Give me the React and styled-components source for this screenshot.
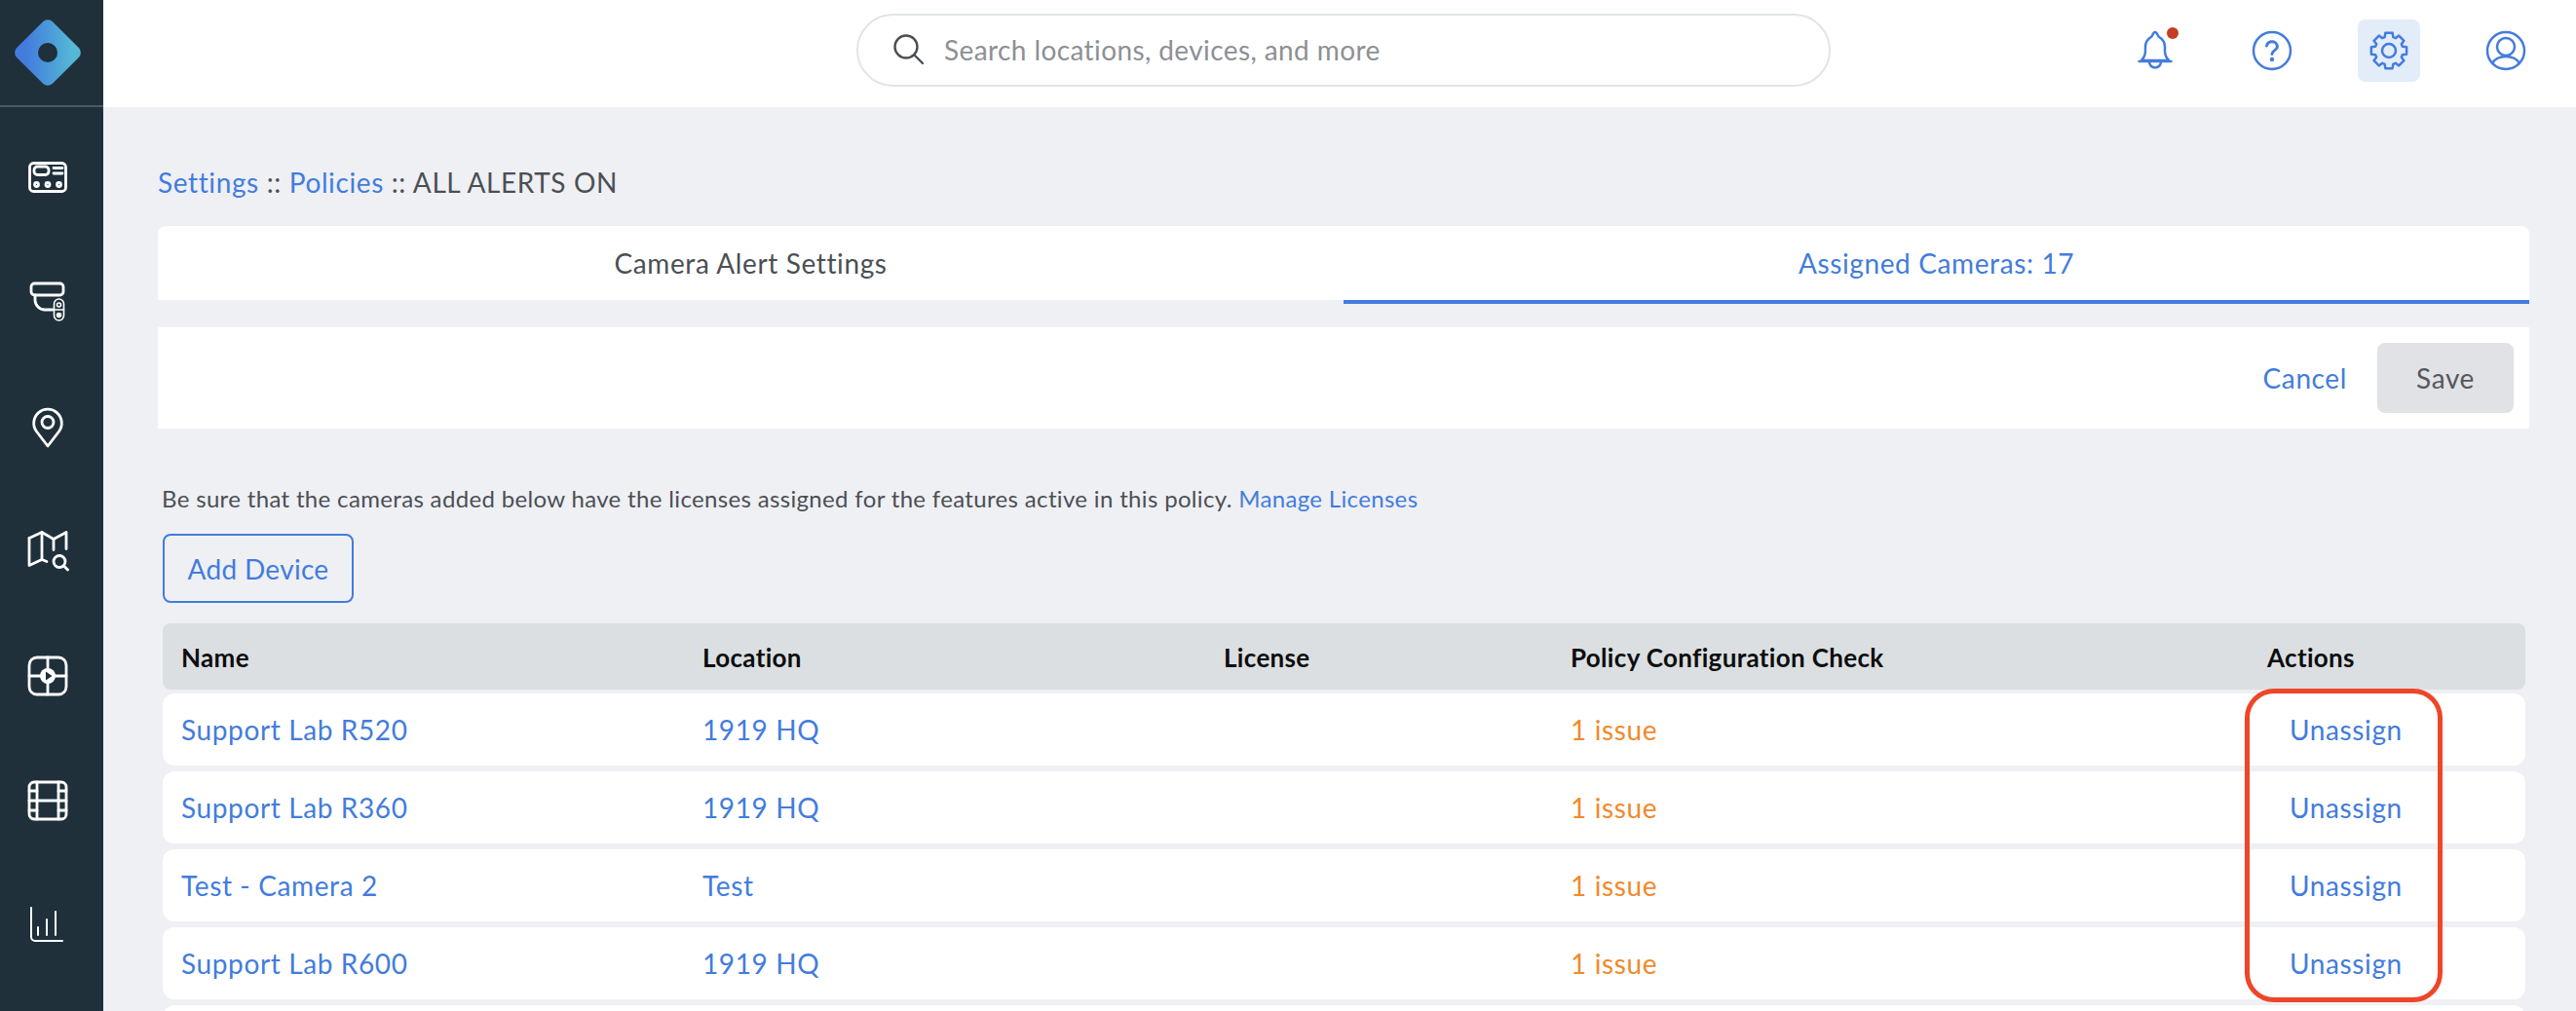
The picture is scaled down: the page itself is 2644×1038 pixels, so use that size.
import React from 'react'
import styled, { createGlobalStyle } from 'styled-components'

const BLUE = '#437cdd'
const FONT = `'Lato', 'Open Sans', sans-serif`

const GlobalStyle = createGlobalStyle`
  html, body {
    margin: 0;
    padding: 0;
    background: #eff0f4;
    overflow: hidden;
  }
  * { box-sizing: border-box; }
`

const Shell = styled.div`
  display: flex;
  width: 2644px;
  height: 1038px;
  overflow: hidden;
  font-family: ${FONT};
  font-size: 28px;
  letter-spacing: 0.62px;
  color: #4b4f54;
`

const Sidebar = styled.nav`
  flex: 0 0 106px;
  display: flex;
  flex-direction: column;
  background: #1f303b;
`

const LogoWrap = styled.div`
  height: 110px;
  flex: none;
  padding-right: 8px;
  display: flex;
  align-items: center;
  justify-content: center;
  border-bottom: 2px solid #4a5a64;
`

const NavList = styled.div`
  padding: 8px 8px 0 0;
  display: flex;
  flex-direction: column;
`

const NavItem = styled.div`
  flex: none;
  height: 128px;
  display: flex;
  align-items: center;
  justify-content: center;
`

const Column = styled.div`
  flex: 1;
  min-width: 0;
  display: flex;
  flex-direction: column;
`

const Header = styled.header`
  flex: none;
  height: 110px;
  background: #fff;
  padding: 0 40px 0 773px;
  display: flex;
  align-items: center;
  justify-content: space-between;
`

const Search = styled.div`
  width: 1000px;
  height: 75px;
  margin-top: -7px;
  border: 2px solid #e2e4e8;
  border-radius: 38px;
  padding: 0 0 2px 35px;
  display: flex;
  align-items: center;
  gap: 19px;
  letter-spacing: 0.4px;
  color: #8d9094;
`

const HeaderIcons = styled.div`
  display: flex;
  gap: 56px;
  margin-top: -7px;
`

const IconButton = styled.div`
  position: relative;
  width: 64px;
  height: 64px;
  border-radius: 8px;
  background: ${p => (p.$active ? '#e3ecf9' : 'transparent')};
  display: flex;
  align-items: center;
  justify-content: center;
`

const Dot = styled.span`
  position: absolute;
  left: 44px;
  top: 8px;
  width: 12px;
  height: 12px;
  border-radius: 50%;
  background: #c43d25;
`

const Main = styled.main`
  flex: 1;
  padding: 58px 48px 0 56px;
`

const Crumbs = styled.div`
  height: 38px;
  line-height: 38px;
  margin-bottom: 26px;
`

const Link = styled.a`
  color: ${BLUE};
  text-decoration: none;
`

const Tabs = styled.div`
  display: grid;
  grid-template-columns: 1fr 1fr;
  height: 80px;
`

const Tab = styled.div`
  display: flex;
  align-items: center;
  justify-content: center;
  background: #fff;
  background-clip: padding-box;
  border-radius: ${p => (p.$active ? '0 8px 0 0' : '8px 0 0 0')};
  color: ${p => (p.$active ? BLUE : '#4b4f54')};
  border-bottom: 4px solid ${p => (p.$active ? BLUE : 'transparent')};
`

const Toolbar = styled.div`
  height: 104px;
  margin-top: 24px;
  padding-right: 16px;
  background: #fff;
  display: flex;
  align-items: center;
  justify-content: flex-end;
  gap: 31px;
`

const SaveButton = styled.div`
  width: 140px;
  height: 72px;
  border-radius: 8px;
  background: #e1e2e5;
  color: #55585c;
  display: flex;
  align-items: center;
  justify-content: center;
`

const Inset = styled.div`
  padding: 0 4px 0 5px;
`

const Notice = styled.p`
  margin: 55px 0 19px -1px;
  height: 34px;
  line-height: 34px;
  font-size: 24px;
  letter-spacing: 0.34px;
`

const AddButton = styled.div`
  width: 196px;
  height: 71px;
  border: 2px solid ${BLUE};
  border-radius: 8px;
  color: ${BLUE};
  letter-spacing: 0.3px;
  display: flex;
  align-items: center;
  justify-content: center;
`

const Table = styled.div`
  position: relative;
  margin-top: 21px;
  display: flex;
  flex-direction: column;
  gap: 6px;
`

const columns = `grid-template-columns: 535px 535px 356px 715px 1fr;`

const HeadRow = styled.div`
  display: grid;
  ${columns}
  align-items: center;
  height: 68px;
  margin-bottom: -2px;
  padding: 2px 0 0 19px;
  background: #dbdfe2;
  border-radius: 8px;
  font-size: 26px;
  font-weight: 700;
  letter-spacing: 0.33px;
  color: #0d0d0d;
`

const Row = styled.div`
  display: grid;
  ${columns}
  align-items: center;
  flex: none;
  height: 74px;
  padding: 0 0 1px 19px;
  background: #fff;
  border-radius: 12px;
  color: ${BLUE};
`

const Issue = styled.span`
  color: #f08a2c;
`

const Action = styled.span`
  padding-left: 23px;
`

const Highlight = styled.div`
  position: absolute;
  left: 2137px;
  top: 67px;
  width: 203px;
  height: 322px;
  border: 5px solid #ee4628;
  border-radius: 30px;
  pointer-events: none;
`

const Line = props => (
  <g fill="none" stroke="#fff" strokeWidth="2.8" strokeLinecap="round" strokeLinejoin="round" {...props} />
)

const Logo = () => (
  <svg width="72" height="72" viewBox="0 0 72 72">
    <defs>
      <linearGradient id="logoFill" x1="0" y1="1" x2="1" y2="0">
        <stop offset="0.2" stopColor="#437cdd" />
        <stop offset="0.85" stopColor="#55b8d6" />
      </linearGradient>
    </defs>
    <rect x="10" y="10" width="52" height="52" rx="7" fill="url(#logoFill)" transform="rotate(45 36 36)" />
    <circle cx="36" cy="36" r="10" fill="#1f303b" />
  </svg>
)

const PanelIcon = () => (
  <svg width="44" height="44" viewBox="0 0 44 44">
    <Line>
      <rect x="3.5" y="7.5" width="37" height="29" rx="4" />
      <rect x="8" y="11" width="15" height="8.5" rx="3.5" />
      <path d="M28 12.5h9M28 18h9" />
      <circle cx="10.5" cy="29.5" r="2" />
      <circle cx="22" cy="29.5" r="2" />
      <circle cx="33.5" cy="29.5" r="2" />
    </Line>
  </svg>
)

const CameraIcon = () => (
  <svg width="44" height="44" viewBox="0 0 44 44">
    <Line>
      <rect x="5" y="3" width="33" height="12" rx="3.5" />
      <path d="M9 15v5a10 10 0 0 0 10 10h8" />
    </Line>
    <Line strokeWidth="1.6">
      <rect x="28.5" y="19" width="10" height="22" rx="5" />
      <path d="M28.5 30h10" />
      <circle cx="33.5" cy="25" r="2" />
      <circle cx="33.5" cy="35.5" r="2" fill="#fff" />
    </Line>
  </svg>
)

const PinIcon = () => (
  <svg width="44" height="44" viewBox="0 0 44 44">
    <Line>
      <path d="M22 42L10.5 27a14.3 14.3 0 1 1 23 0z" />
      <circle cx="22" cy="17.5" r="6" />
    </Line>
  </svg>
)

const MapIcon = () => (
  <svg width="44" height="44" viewBox="0 0 44 44">
    <Line>
      <path d="M3 8.5L16 2.5l12 7 13-7v17" />
      <path d="M3 8.5v28l13-6 5 2" />
      <path d="M16 2.5v28M28 9.5v11" />
      <circle cx="34" cy="32.5" r="6" />
      <path d="M38.5 37l4 4" />
    </Line>
  </svg>
)

const PlayGridIcon = () => (
  <svg width="44" height="44" viewBox="0 0 44 44">
    <Line>
      <rect x="3" y="3" width="38" height="38" rx="8" />
      <path d="M22 3v38M3 22h38" />
    </Line>
    <circle cx="22" cy="22" r="8" fill="#fff" />
    <path d="M20 17.5l6.5 4.5-6.5 4.5z" fill="#1f303b" />
  </svg>
)

const FilmIcon = () => (
  <svg width="44" height="44" viewBox="0 0 44 44">
    <Line>
      <rect x="3" y="3" width="38" height="38" rx="5" />
      <path d="M11 3v38M33 3v38M11 22h22" />
      <path d="M3 12h8M3 22h8M3 32h8M33 12h8M33 22h8M33 32h8" />
    </Line>
  </svg>
)

const ChartIcon = () => (
  <svg width="44" height="44" viewBox="0 0 44 44">
    <Line strokeWidth="2">
      <path d="M5 4v30a4 4 0 0 0 4 4h28" />
      <path d="M12 24v8M21 16v16M30 8v24" />
    </Line>
  </svg>
)

const Blue = props => (
  <g fill="none" stroke={BLUE} strokeWidth="2.5" strokeLinecap="round" strokeLinejoin="round" {...props} />
)

const BellIcon = () => (
  <svg width="44" height="44" viewBox="0 0 44 44">
    <Blue>
      <path d="M8 32c3-3 4-5 4-10v-4c0-6 4-9 6.5-10.500C19.500 5.500 20.500 3 22 3s2.500 2.500 3.500 4.500C28 9 32 12 32 18v4c0 5 1 7 4 10z" />
      <path d="M5.500 33h33" />
      <path d="M16 33.500a6 6 0 0 0 12 0" />
    </Blue>
  </svg>
)

const HelpIcon = () => (
  <svg width="44" height="44" viewBox="0 0 44 44">
    <Blue>
      <circle cx="22" cy="22" r="19" />
      <path d="M16.500 17a5.600 5.600 0 0 1 11 .8c0 3.600-5.500 4-5.500 7.700" strokeWidth="3" />
    </Blue>
    <circle cx="22" cy="31" r="2.200" fill={BLUE} />
  </svg>
)

// 8 tooth cog outline, built once from polar points
const gearPath = (() => {
  const pts = []
  for (let i = 0; i < 8; i++) {
    const a = (i * Math.PI) / 4 - Math.PI / 2
    const at = (r, d) => `${(22 + r * Math.cos(a + d)).toFixed(2)} ${(22 + r * Math.sin(a + d)).toFixed(2)}`
    pts.push(at(14.5, -0.3), at(18.5, -0.2), at(18.5, 0.2), at(14.5, 0.3))
  }
  return `M${pts.join('L')}z`
})()

const GearIcon = () => (
  <svg width="44" height="44" viewBox="0 0 44 44">
    <Blue>
      <path d={gearPath} />
      <circle cx="22" cy="22" r="7" />
    </Blue>
  </svg>
)

const UserIcon = () => (
  <svg width="44" height="44" viewBox="0 0 44 44">
    <Blue>
      <circle cx="22" cy="22" r="19" />
      <circle cx="22" cy="18" r="9" />
      <path d="M8 35c3-5 8-7 14-7s11 2 14 7" />
    </Blue>
  </svg>
)

const SearchIcon = () => (
  <svg width="34" height="34" viewBox="0 0 34 34">
    <g fill="none" stroke="#4b4f54" strokeWidth="2.4" strokeLinecap="round">
      <circle cx="14" cy="14" r="11.5" />
      <path d="M22.5 22.5L31 31" />
    </g>
  </svg>
)

const navIcons = [PanelIcon, CameraIcon, PinIcon, MapIcon, PlayGridIcon, FilmIcon, ChartIcon]

const cameras = [
  { name: 'Support Lab R520', location: '1919 HQ' },
  { name: 'Support Lab R360', location: '1919 HQ' },
  { name: 'Test - Camera 2', location: 'Test' },
  { name: 'Support Lab R600', location: '1919 HQ' },
]

const App = () => (
  <Shell>
    <GlobalStyle />
    <Sidebar>
      <LogoWrap>
        <Logo />
      </LogoWrap>
      <NavList>
        {navIcons.map((Icon, i) => (
          <NavItem key={i}>
            <Icon />
          </NavItem>
        ))}
      </NavList>
    </Sidebar>
    <Column>
      <Header>
        <Search>
          <SearchIcon />
          Search locations, devices, and more
        </Search>
        <HeaderIcons>
          <IconButton>
            <BellIcon />
            <Dot />
          </IconButton>
          <IconButton>
            <HelpIcon />
          </IconButton>
          <IconButton $active>
            <GearIcon />
          </IconButton>
          <IconButton>
            <UserIcon />
          </IconButton>
        </HeaderIcons>
      </Header>
      <Main>
        <Crumbs>
          <Link>Settings</Link> :: <Link>Policies</Link> :: ALL ALERTS ON
        </Crumbs>
        <Tabs>
          <Tab>Camera Alert Settings</Tab>
          <Tab $active>Assigned Cameras: 17</Tab>
        </Tabs>
        <Toolbar>
          <Link>Cancel</Link>
          <SaveButton>Save</SaveButton>
        </Toolbar>
        <Inset>
          <Notice>
            Be sure that the cameras added below have the licenses assigned for the features active in this policy.{' '}
            <Link>Manage Licenses</Link>
          </Notice>
          <AddButton>Add Device</AddButton>
          <Table>
            <HeadRow>
              <span>Name</span>
              <span>Location</span>
              <span>License</span>
              <span>Policy Configuration Check</span>
              <span>Actions</span>
            </HeadRow>
            {cameras.map(c => (
              <Row key={c.name}>
                <span>{c.name}</span>
                <span>{c.location}</span>
                <span />
                <Issue>1 issue</Issue>
                <Action>Unassign</Action>
              </Row>
            ))}
            <Row />
            <Highlight />
          </Table>
        </Inset>
      </Main>
    </Column>
  </Shell>
)

export default App
